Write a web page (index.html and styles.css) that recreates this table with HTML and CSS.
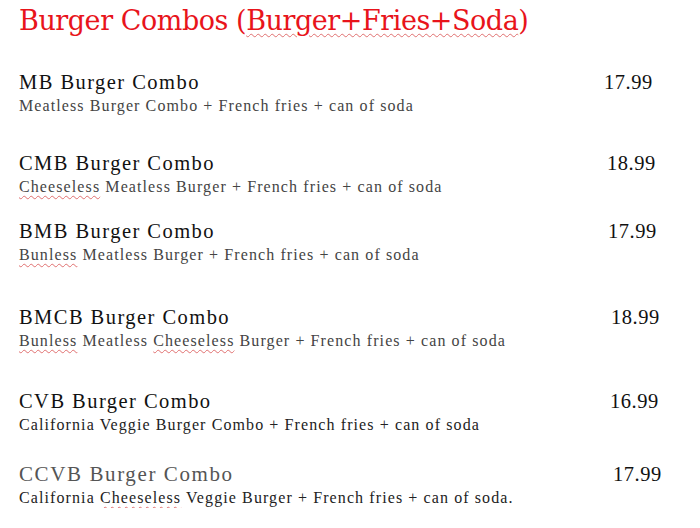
FILE: index.html
```html
<!DOCTYPE html>
<html>
<head>
<meta charset="utf-8">
<link rel="stylesheet" href="styles.css">
</head>
<body>
<div class="page">
  <h1 class="title">Burger Combos (<span class="spell">Burger+Fries+Soda</span>)</h1>
  <div class="menu">
    <div class="item item-1">
      <div class="name">MB Burger Combo</div>
      <div class="price">17.99</div>
      <div class="desc">Meatless Burger Combo + French fries + can of soda</div>
    </div>
    <div class="item item-2">
      <div class="name">CMB Burger Combo</div>
      <div class="price">18.99</div>
      <div class="desc"><span class="spell">Cheeseless</span> Meatless Burger + French fries + can of soda</div>
    </div>
    <div class="item item-3">
      <div class="name">BMB Burger Combo</div>
      <div class="price">17.99</div>
      <div class="desc"><span class="spell">Bunless</span> Meatless Burger + French fries + can of soda</div>
    </div>
    <div class="item item-4">
      <div class="name">BMCB Burger Combo</div>
      <div class="price">18.99</div>
      <div class="desc"><span class="spell">Bunless</span> Meatless <span class="spell">Cheeseless</span> Burger + French fries + can of soda</div>
    </div>
    <div class="item item-5">
      <div class="name">CVB Burger Combo</div>
      <div class="price">16.99</div>
      <div class="desc dark">California Veggie Burger Combo + French fries + can of soda</div>
    </div>
    <div class="item item-6">
      <div class="name light">CCVB Burger Combo</div>
      <div class="price">17.99</div>
      <div class="desc dark">California <span class="spell">Cheeseless</span> Veggie Burger + French fries + can of soda.</div>
    </div>
  </div>
</div>
</body>
</html>
```

FILE: styles.css
```css
html, body {
  margin: 0;
  padding: 0;
  background: #fff;
}

.page {
  padding: 4px 0 0 19px;
  font-family: "Liberation Serif", serif;
}

.title {
  margin: 0;
  font-family: "DejaVu Serif", serif;
  font-weight: normal;
  font-size: 27px;
  letter-spacing: -0.45px;
  line-height: 34px;
  color: #e8141b;
}

.spell {
  text-decoration: underline wavy #e07070;
  text-decoration-thickness: 1px;
  text-underline-offset: 3px;
}

.menu {
  display: flex;
  flex-direction: column;
}

.item {
  display: grid;
  grid-template-columns: 585px auto;
  row-gap: 0;
}

.item-1 { margin-top: 32px; }
.item-2 { margin-top: 35px; }
.item-3 { margin-top: 22px; }
.item-4 { margin-top: 40px; }
.item-5 { margin-top: 38px; }
.item-6 { margin-top: 27px; }

.name {
  font-size: 20.5px;
  line-height: 24px;
  color: #111;
  letter-spacing: 1.45px;
}

.name.light {
  font-size: 21px;
  letter-spacing: 1.6px;
  color: #555;
}

.price {
  font-size: 20.5px;
  line-height: 24px;
  letter-spacing: 0.5px;
  color: #111;
}

.item-2 .price { padding-left: 3px; }
.item-3 .price { padding-left: 4px; }
.item-4 .price { padding-left: 7px; }
.item-5 .price { padding-left: 6px; }
.item-6 .price { padding-left: 9px; }

.desc {
  grid-column: 1 / -1;
  margin-top: 2px;
  font-size: 16px;
  line-height: 20px;
  letter-spacing: 1.1px;
  color: #444;
}

.desc.dark {
  color: #222;
}
```
